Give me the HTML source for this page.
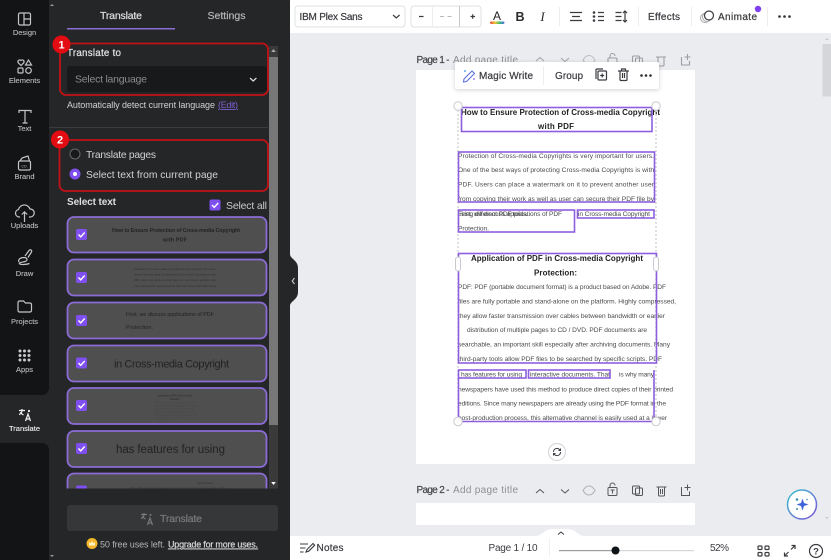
<!DOCTYPE html>
<html><head><meta charset="utf-8"><style>
html,body{margin:0;padding:0;width:831px;height:560px;overflow:hidden;background:#ebecf0}
svg{display:block;filter:blur(.35px)}
text{font-family:"Liberation Sans",sans-serif}
.r{font-size:7.500px;fill:#b9babb;stroke:#b9babb;stroke-width:.12;text-anchor:middle}
.p{fill:#4a4a4e}
.h{font-weight:700;fill:#222;font-size:8px}
.m{fill:#3b3c40;stroke:#3b3c40;stroke-width:.22;font-size:10px}
.ic{fill:none;stroke:#c4c5c6;stroke-width:1.200}
.t{fill:none;stroke:#3b3c40;stroke-width:1.200}
.t2{fill:none;stroke:#55565a;stroke-width:1}
.g{fill:none;stroke:#8a8b90;stroke-width:1.100}
.b{fill:none;stroke:#8d5fe0;stroke-width:1.600}
.c{fill:#4f4f50;stroke:#8b6cd6;stroke-width:1.800}
</style></head><body>
<svg width="831" height="560" viewBox="0 0 831 560" xmlns="http://www.w3.org/2000/svg">
<defs>
<g id="cb"><rect x="-5.500" y="-5.500" width="11" height="11" rx="2" fill="#7f4ff0"/><path d="M-3 0l2.200 2.300L3.200-2" fill="none" stroke="#fff" stroke-width="1.400"/></g>
<clipPath id="list"><rect x="60" y="200" width="220" height="288.500"/></clipPath>
<linearGradient id="ring" x1="0" y1="0" x2="1" y2="1"><stop offset="0" stop-color="#35c3cf"/><stop offset="1" stop-color="#7d4fd8"/></linearGradient>
<linearGradient id="rainbow" x1="0" x2="1"><stop offset="0" stop-color="#e8453c"/><stop offset=".35" stop-color="#f3c22f"/><stop offset=".65" stop-color="#3bbf6a"/><stop offset="1" stop-color="#4a6ee8"/></linearGradient>
</defs>

<rect width="831" height="560" fill="#ebecf0"/>

<!-- rail + panel -->
<rect x="0" y="0" width="290" height="560" fill="#252627"/>
<path d="M0 0H49V388a7 7 0 0 1-7 7H0Z" fill="#131416"/>
<path d="M0 443H42a7 7 0 0 1 7 7V560H0Z" fill="#131416"/>

<!-- rail icons -->
<g class="ic"><rect x="18.500" y="13" width="12" height="12" rx="1.500"/><path d="M24 13v12M24 19h6.500"/></g>
<text class="r" x="24.500" y="35">Design</text>
<g class="ic"><path d="M21 65.500l-2.800-2.800a1.800 1.800 0 0 1 2.800-2.200 1.800 1.800 0 0 1 2.800 2.200Z"/><path d="M28.500 60l3 5h-6Z"/><rect x="18" y="68" width="5" height="5" rx="1"/><circle cx="28.500" cy="70.500" r="2.800"/></g>
<text class="r" x="24.500" y="83">Elements</text>
<path class="ic" d="M19 113v-2.500H31V113M25 110.500v12.500M22.500 123h5"/>
<text class="r" x="24.500" y="131">Text</text>
<g class="ic"><rect x="18.500" y="161" width="12" height="9" rx="1.500"/><path d="M20 161l2-3 6-2 1.500 5"/></g>
<text x="24.500" y="167.500" font-size="3.500" fill="#c4c5c6" text-anchor="middle">CO.</text>
<text class="r" x="24.500" y="179">Brand</text>
<path class="ic" d="M20 217h-1a3.800 3.800 0 0 1-.5-7.500 6 6 0 0 1 11.500-.5 4 4 0 0 1 .5 8H29M24.500 222v-10M21.800 214.500l2.700-2.700 2.700 2.700"/>
<text class="r" x="24.500" y="228">Uploads</text>
<path class="ic" d="M19 262c-1.500-3 2-4.500 5-4.500s4.500 3 1 4-6.500 1-5.500 2.300 7 .7 10-.3M25 256l4-5.500a1.400 1.400 0 0 1 2.500 1.500l-3.500 5.500"/>
<text class="r" x="24.500" y="276">Draw</text>
<path class="ic" d="M18 302.500a1.500 1.500 0 0 1 1.500-1.500h4l2 2h4.500a1.500 1.500 0 0 1 1.500 1.500v6a1.500 1.500 0 0 1-1.500 1.500h-10.500a1.500 1.500 0 0 1-1.500-1.500Z"/>
<text class="r" x="24.500" y="324">Projects</text>
<g fill="#c9cacb"><circle cx="20" cy="351" r="1.500"/><circle cx="24.500" cy="351" r="1.500"/><circle cx="29" cy="351" r="1.500"/><circle cx="20" cy="355.500" r="1.500"/><circle cx="24.500" cy="355.500" r="1.500"/><circle cx="29" cy="355.500" r="1.500"/><circle cx="20" cy="360" r="1.500"/><circle cx="24.500" cy="360" r="1.500"/><circle cx="29" cy="360" r="1.500"/></g>
<text class="r" x="24.500" y="372">Apps</text>
<g fill="none" stroke="#f2f2f2" stroke-width="1.200"><path d="M19 410.500h6M22 409v1.500c0 2-1.500 3.500-3 4M20.500 412c.5 1.200 2 2.500 3 3M25.500 421l2.500-7 2.500 7M26.300 419h3.500"/></g><circle cx="29" cy="411" r="1.100" fill="#f2f2f2"/>
<text class="r" x="24.500" y="431" style="fill:#f0f0f0;stroke:#f0f0f0">Translate</text>
<path d="M52 4l2 2h-4zM52 557l2-2h-4z" fill="#999"/>

<!-- tabs -->
<text x="121" y="19" font-size="10.500" fill="#dcdcdd" stroke="#dcdcdd" stroke-width=".25" text-anchor="middle" textLength="42">Translate</text>
<text x="226.500" y="19" font-size="10.500" fill="#b5b6b7" stroke="#b5b6b7" stroke-width=".2" text-anchor="middle" textLength="38">Settings</text>
<rect x="67" y="28" width="108" height="1.500" fill="#8b6fd8"/>

<!-- scrollbar -->
<rect x="269" y="46" width="9" height="442.500" fill="#3a3a3b"/>
<rect x="269" y="57" width="9" height="368" fill="#777"/>
<path d="M273.500 49l2.300 3h-4.600z" fill="#aaa"/><path d="M273.500 485l2.300-3h-4.600z" fill="#fff"/>

<!-- translate to -->
<text x="67" y="56" font-size="9.800" fill="#e2e2e3" stroke="#e2e2e3" stroke-width=".22" textLength="54">Translate to</text>
<rect x="67" y="66" width="200" height="26" rx="3" fill="#18191b"/>
<text x="75" y="82.500" font-size="10.500" fill="#8b8c8e" textLength="72">Select language</text>
<path d="M250 78l3.200 3 3.200-3" fill="none" stroke="#dcdcdc" stroke-width="1.200"/>
<text x="67" y="108" font-size="9" fill="#d0d0d1" textLength="148">Automatically detect current language</text>
<text x="218" y="108" font-size="9" fill="#7d5fd0" text-decoration="underline" textLength="20">(Edit)</text>
<rect x="49" y="127" width="219" height="1" fill="#3a3b3c"/>

<!-- radios -->
<circle cx="75" cy="154" r="5" fill="#18191b" stroke="#67686a"/>
<text x="86" y="158" font-size="10.300" fill="#d2d2d3" textLength="70">Translate pages</text>
<circle cx="75" cy="174" r="5.500" fill="#7f4ff0"/><circle cx="75" cy="174" r="2" fill="#fff"/>
<text x="86" y="178" font-size="10.300" fill="#d2d2d3" textLength="132">Select text from current page</text>

<!-- select text -->
<text x="67" y="205" font-size="10" font-weight="700" fill="#dedede" textLength="49">Select text</text>
<use href="#cb" x="215" y="205"/>
<text x="226" y="209" font-size="10.500" fill="#c9c9ca" textLength="41">Select all</text>

<!-- cards -->
<g clip-path="url(#list)">
<rect class="c" x="67.500" y="217" width="199" height="35.500" rx="6.500"/>
<rect class="c" x="67.500" y="259.500" width="199" height="36" rx="6.500"/>
<rect class="c" x="67.500" y="302.500" width="199" height="36" rx="6.500"/>
<rect class="c" x="67.500" y="345.500" width="199" height="36" rx="6.500"/>
<rect class="c" x="67.500" y="388" width="199" height="36" rx="6.500"/>
<rect class="c" x="67.500" y="431" width="199" height="36" rx="6.500"/>
<rect class="c" x="67.500" y="473.500" width="199" height="36" rx="6.500"/>
<use href="#cb" x="81.500" y="234.500"/><use href="#cb" x="81.500" y="277.500"/><use href="#cb" x="81.500" y="320.500"/><use href="#cb" x="81.500" y="363"/><use href="#cb" x="81.500" y="405.500"/><use href="#cb" x="81.500" y="448.500"/><use href="#cb" x="81.500" y="491"/>
<g fill="#222">
<text x="112" y="232" font-size="5.300" font-weight="700" textLength="128">How to Ensure Protection of Cross-media Copyright</text>
<text x="163" y="241.500" font-size="5.300" font-weight="700" textLength="24">with PDF</text>
<g opacity=".75"><text x="134" y="270" font-size="2.600" textLength="82">Protection of Cross-media Copyrights is very important for users.</text>
<text x="134" y="275.500" font-size="2.600" textLength="82">One of the best ways of protecting Cross-media Copyrights is with</text>
<text x="134" y="281" font-size="2.600" textLength="82">PDF. Users can place a watermark on it to prevent another user</text>
<text x="134" y="287" font-size="2.600" textLength="82">from copying their work as well as user can secure their PDF file by</text></g>
<text x="126" y="316" font-size="5.400" textLength="88">First, we discuss applications of PDF</text>
<text x="126" y="329" font-size="5.400" textLength="27">Protection.</text>
<text x="114" y="367.500" font-size="11" textLength="115">in Cross-media Copyright</text>
<text x="116" y="453" font-size="11.500" textLength="109">has features for using</text>
<g opacity=".55"><text x="158" y="396.500" font-size="2.600" font-weight="700" textLength="34">Application of PDF in Cross-media</text>
<text x="170" y="400" font-size="2.600" font-weight="700" textLength="10">Protection:</text>
<g fill="#3a3a3a" font-size="2px"><text x="155" y="403.500" textLength="39">PDF: PDF (portable document format)</text><text x="154" y="406.500" textLength="45">files are fully portable and stand-alone on the platform</text><text x="155" y="409.500" textLength="40">they allow faster transmission over cables between</text><text x="156" y="412.500" textLength="38">distribution of multiple pages to CD / DVD. PDF</text><text x="154" y="415.500" textLength="43">searchable, an important skill especially after</text><text x="155" y="418.500" textLength="40">third-party tools allow PDF files to be searched</text></g></g>
<g opacity=".6"><text x="197" y="484" font-size="2.600" font-weight="700" textLength="16">Application</text>
<text x="130" y="489" font-size="2.600" textLength="95">PDF: PDF (portable document format) is a product based on Adobe. PDF</text></g>
</g>
</g>

<!-- translate button -->
<rect x="67" y="505" width="211" height="26" rx="3" fill="#363738"/>
<g fill="none" stroke="#77787a" stroke-width="1.200"><path d="M141 514.500h6M144 513v1.500c0 2-1.500 3.500-3 4M142.500 516c.5 1.200 2 2.500 3 3M147.500 525l2.500-7 2.500 7M148.300 523h3.500"/></g><circle cx="150.500" cy="515" r="1" fill="#77787a"/>
<text x="160" y="522" font-size="10.500" fill="#77787a" stroke="#77787a" stroke-width=".25" textLength="42">Translate</text>
<circle cx="92" cy="543.500" r="5.500" fill="#f3b62c"/><path d="M89 545.500v-3.500l1.500 1.200 1.500-2 1.500 2 1.500-1.200v3.500Z" fill="#fff3c4"/>
<text x="100" y="547.500" font-size="9" fill="#b4b5b6" textLength="65">50 free uses left.</text>
<text x="168" y="547.500" font-size="9" fill="#d8d8d9" stroke="#d8d8d9" stroke-width=".2" text-decoration="underline" textLength="90">Upgrade for more uses.</text>

<!-- red boxes -->
<rect x="60" y="43.500" width="208" height="51.500" rx="6" fill="none" stroke="#c11216" stroke-width="1.800"/>
<rect x="59.500" y="140" width="208.500" height="51" rx="6" fill="none" stroke="#c11216" stroke-width="1.800"/>
<circle cx="61.500" cy="44.500" r="9" fill="#e20c12"/><text x="61.500" y="48.500" font-size="11" font-weight="700" fill="#fff" text-anchor="middle">1</text>
<circle cx="60" cy="139.500" r="9" fill="#e20c12"/><text x="60" y="143.500" font-size="11" font-weight="700" fill="#fff" text-anchor="middle">2</text>

<!-- collapse handle -->
<path d="M290 254c0 5 8 6 8 14v24c0 8-8 9-8 14Z" fill="#252627"/>
<path d="M294.500 278l-2.300 3 2.300 3" fill="none" stroke="#c9c9ca" stroke-width="1.100"/>

<!-- top toolbar -->
<rect x="290" y="0" width="541" height="33" fill="#fff"/>
<rect x="295" y="6" width="110" height="21" rx="3" fill="#fff" stroke="#dfe0e2"/>
<text class="m" x="299.500" y="20" textLength="63">IBM Plex Sans</text>
<path d="M393 15l3.300 3 3.300-3" class="t"/>
<rect x="411" y="6" width="70" height="21" rx="3" fill="#fff" stroke="#dfe0e2"/>
<path d="M432.500 6v21" stroke="#eee"/><path d="M459.500 6v21" stroke="#c8c9cc"/>
<path d="M419 16.500h4.500M475 16.500h-4.500M472.700 14.300v4.500" stroke="#3b3c40" stroke-width="1.200"/>
<path d="M440 16.500h4M447.500 16.500h4" stroke="#b8b9bc"/>
<text x="497" y="20" font-size="12" fill="#222" text-anchor="middle">A</text>
<rect x="490" y="21.500" width="14.500" height="2.500" rx="1.200" fill="url(#rainbow)"/>
<text x="520" y="21" font-size="12.500" font-weight="700" fill="#2a2b2e" text-anchor="middle">B</text>
<text x="542.500" y="21" font-size="13" font-style="italic" fill="#2a2b2e" text-anchor="middle" style="font-family:'Liberation Serif',serif">I</text>
<path d="M559.500 7v19M638.500 7v19M691.500 7v19M767.500 7v19" stroke="#eceded"/>
<path d="M570 12.500h12M572 16.500h8M570 20.500h12" class="t"/>
<g fill="#3b3c40"><circle cx="594" cy="12.500" r="1.300"/><circle cx="594" cy="16.500" r="1.300"/><circle cx="594" cy="20.500" r="1.300"/></g>
<path d="M598 12.500h6M598 16.500h6M598 20.500h6" class="t"/>
<path d="M615.500 12.500h6M615.500 16.500h6M615.500 20.500h6M625 11v11M623 13l2-2 2 2M623 20l2 2 2-2" class="t"/>
<text class="m" x="648" y="20" textLength="32">Effects</text>
<g fill="#fff" stroke="#a8a9ad" stroke-width="1"><circle cx="705" cy="18" r="4.500"/><circle cx="707" cy="17" r="4.500"/></g><circle cx="709" cy="15.500" r="4.500" fill="#fff" stroke="#3b3c40" stroke-width="1.200"/>
<text class="m" x="718" y="20" textLength="39">Animate</text>
<circle cx="758" cy="9" r="3.200" fill="#7d3ff0"/>
<g fill="#2a2b2e"><circle cx="779.500" cy="16.500" r="1.300"/><circle cx="784.500" cy="16.500" r="1.300"/><circle cx="789.500" cy="16.500" r="1.300"/></g>

<!-- right scrollbar -->
<rect x="822.500" y="44" width="8.500" height="52.500" fill="#d5d6da"/>
<path d="M827 38l1.800 2h-3.600zM827 519l1.800-2h-3.600z" fill="#c6c7ca"/>

<!-- page 1 header -->
<text x="416.500" y="63" font-size="10" fill="#45464a" stroke="#45464a" stroke-width=".2" textLength="33">Page 1 -</text>
<text x="453" y="63" font-size="10" fill="#8e8f93" textLength="65">Add page title</text>
<path d="M536 61l4-3.500 4 3.500M561 58l4 3.500 4-3.500" class="g" opacity=".7"/>
<g class="g" opacity=".8"><path d="M583 60c2-3.500 4-4.500 6-4.500s4 1 6 4.500c-2 3.500-4 4.500-6 4.500s-4-1-6-4.500Z" opacity=".6"/><rect x="608" y="58" width="9" height="7.500" rx="1"/><path d="M610 58v-2a2.500 2.500 0 0 1 5 0"/><rect x="632.500" y="56" width="7" height="8" rx="1"/><rect x="635.500" y="58" width="7" height="7.500" rx="1"/><path d="M656 57h10M658 57v8a1 1 0 0 0 1 1h4a1 1 0 0 0 1-1v-8"/><path d="M681.500 57v8h8v-4M687.500 54v6M684.500 57h6"/></g>

<!-- page 1 -->
<rect x="416" y="70" width="279" height="394" fill="#fff"/>

<!-- doc text -->
<g>
<text class="h" x="461" y="115" textLength="199">How to Ensure Protection of Cross-media Copyright</text>
<text class="h" x="538" y="129" textLength="36">with PDF</text>
<g class="p" font-size="6.600">
<text x="458" y="158" textLength="196">Protection of Cross-media Copyrights is very important for users.</text>
<text x="458" y="172" textLength="196">One of the best ways of protecting Cross-media Copyrights is with</text>
<text x="458" y="186.500" textLength="196">PDF. Users can place a watermark on it to prevent another user</text>
<text x="458" y="201" textLength="196">from copying their work as well as user can secure their PDF file by</text>
<text x="458" y="216" textLength="104">First, we discuss applications of PDF</text>
<text x="458" y="216" textLength="70">using different PDF tools.</text>
<text x="458" y="230.500" textLength="31">Protection.</text>
<text x="578" y="216" textLength="72">in Cross-media Copyright</text>
</g>
<text class="h" x="471" y="261" textLength="172">Application of PDF in Cross-media Copyright</text>
<text class="h" x="534" y="275.500" textLength="43">Protection:</text>
<g class="p" font-size="6.600">
<text x="458" y="289" textLength="208">PDF: PDF (portable document format) is a product based on Adobe. PDF</text>
<text x="458" y="303.500" textLength="218">files are fully portable and stand-alone on the platform. Highly compressed,</text>
<text x="458" y="318" textLength="207">they allow faster transmission over cables between bandwidth or earlier</text>
<text x="467" y="332" textLength="180">distribution of multiple pages to CD / DVD. PDF documents are</text>
<text x="458" y="346.500" textLength="212">searchable, an important skill especially after archiving documents. Many</text>
<text x="458" y="361" textLength="204">third-party tools allow PDF files to be searched by specific scripts. PDF</text>
<text x="461" y="376.500" textLength="61">has features for using</text>
<text x="530" y="376.500" textLength="80">interactive documents. That</text>
<text x="619" y="376.500" textLength="35">is why many</text>
<text x="458" y="391.500" textLength="215">newspapers have used this method to produce direct copies of their printed</text>
<text x="458" y="405.500" textLength="208">editions. Since many newspapers are already using the PDF format in the</text>
<text x="458" y="420" textLength="209">post-production process, this alternative channel is easily used at a lower</text>
</g>
</g>

<!-- selection -->
<path d="M458 106V421M656 106V421" stroke="#d4d5da" stroke-width="1.500" stroke-dasharray="2 2" fill="none"/>
<rect class="b" x="461.500" y="107.500" width="190.500" height="24"/>
<rect class="b" x="458.500" y="152" width="196" height="50"/>
<rect class="b" x="458.500" y="210" width="116" height="22"/>
<rect class="b" x="577.500" y="210" width="76.500" height="8"/>
<rect class="b" x="458.500" y="253.500" width="198" height="109.500"/>
<rect class="b" x="458.500" y="370" width="67.500" height="8"/>
<rect class="b" x="528.500" y="370" width="81.500" height="8"/>
<path class="b" d="M458.500 378V421.500H654V370"/>
<g fill="#fff" stroke="#c9cad0"><circle cx="458" cy="106" r="4.200"/><circle cx="656" cy="106" r="4.200"/><circle cx="458" cy="421.500" r="4.200"/><circle cx="656" cy="421.500" r="4.200"/><rect x="455.500" y="257" width="5" height="14" rx="2.500"/><rect x="653.500" y="257" width="5" height="14" rx="2.500"/></g>
<circle cx="557" cy="452" r="8.500" fill="#fff" stroke="#d8d9dc" stroke-width="1.200"/>
<path d="M553.500 452a3.500 3.500 0 0 1 6-2.500l1 1M560.500 452a3.500 3.500 0 0 1-6 2.500l-1-1M560.500 448.500v2h-2M553.500 455.500v-2h2" fill="none" stroke="#3b3c40" stroke-width="1"/>

<!-- popup -->
<rect x="455" y="62" width="204" height="27" rx="2" fill="#fff" style="filter:drop-shadow(0 1px 2px rgba(0,0,0,.18))"/>
<path d="M464 79l8-8 2.500 2.500-8 8-3 .5Z" fill="none" stroke="#5b6fe0" stroke-width="1.100"/><circle cx="465" cy="71" r="1" fill="#5fa8e8"/><circle cx="474" cy="79" r=".9" fill="#8d5fe0"/>
<text class="m" x="479" y="79" textLength="54">Magic Write</text>
<path d="M543.500 66v19" stroke="#eee"/>
<text class="m" x="555" y="79" textLength="28">Group</text>
<g class="t"><path d="M596 79v-9a1 1 0 0 1 1-1h6"/><rect x="598" y="71" width="8.500" height="9" rx="1"/><path d="M602.200 73.500v4M600.200 75.500h4"/><path d="M618 71h11M620 71v8.500a1 1 0 0 0 1 1h5a1 1 0 0 0 1-1V71M621.500 71v-2h4v2M622.500 73v5M624.500 73v5"/></g>
<g fill="#2a2b2e"><circle cx="641.500" cy="75.500" r="1.300"/><circle cx="646" cy="75.500" r="1.300"/><circle cx="650.500" cy="75.500" r="1.300"/></g>

<!-- page 2 header -->
<text x="416.500" y="493" font-size="10" fill="#45464a" stroke="#45464a" stroke-width=".2" textLength="33">Page 2 -</text>
<text x="453" y="493" font-size="10" fill="#8e8f93" textLength="65">Add page title</text>
<path d="M536 493l4-3.500 4 3.500M561 489.500l4 3.500 4-3.500" class="t2"/>
<g class="g"><path d="M583 490.500c2-3.500 4-4.500 6-4.500s4 1 6 4.500c-2 3.500-4 4.500-6 4.500s-4-1-6-4.500Z" opacity=".6"/></g>
<g class="t2"><rect x="608" y="487.500" width="9" height="8" rx="1"/><path d="M610 487.500v-2a2.500 2.500 0 0 1 5 0M610.500 490h4M612.500 490v3.500"/><rect x="632.500" y="486" width="7" height="8" rx="1"/><rect x="635.500" y="488" width="7" height="7.500" rx="1"/><path d="M656.500 487h10M658.500 487v8a1 1 0 0 0 1 1h4a1 1 0 0 0 1-1v-8M660.500 489v5M662.500 489v5"/><path d="M681.500 487v8.500h8v-4M687.500 484.500v6M684.500 487.500h6"/></g>
<rect x="416" y="503" width="279" height="22" fill="#fff"/>

<!-- AI button -->
<circle cx="802" cy="504.500" r="14.500" fill="#fff" stroke="url(#ring)" stroke-width="1.500"/>
<path d="M802.500 498.500l1.500 4.500 4.500 1.500-4.500 1.500-1.500 4.500-1.500-4.500-4.500-1.500 4.500-1.500Z" fill="#3f63d8"/><circle cx="797" cy="499.500" r="1.300" fill="#3a8fb0"/><circle cx="807" cy="499.500" r=".8" fill="#3a8fb0"/><circle cx="797" cy="509" r="1" fill="#3a8fb0"/>

<!-- bottom bar -->
<path d="M535 536c6 0 8-4 12-6 3-1.500 23-1.500 26 0 4 2 6 6 12 6Z" fill="#fff"/>
<rect x="290" y="536" width="541" height="24" fill="#fff"/>
<path d="M558 534.500l3-2.500 3 2.500" fill="none" stroke="#3b3c40" stroke-width="1"/>
<path d="M300 544h8M300 548h5.500M300 552h3.500M306 552l1-2.500 6-6 1.700 1.700-6 6Z" fill="none" stroke="#3b3c40" stroke-width="1.100"/>
<text class="m" x="316.500" y="551" textLength="27">Notes</text>
<text x="488.500" y="551" font-size="10" fill="#3b3c40" textLength="49">Page 1 / 10</text>
<path d="M549.500 538v19" stroke="#f0f0f1"/>
<rect x="559" y="550" width="56" height="1.200" fill="#9a9b9e"/><rect x="615" y="550" width="79" height="1.200" fill="#d5d6d8"/>
<circle cx="615.500" cy="550.500" r="4" fill="#0e1318"/>
<text x="710" y="551" font-size="10" fill="#3b3c40" textLength="19">52%</text>
<g class="t"><rect x="758" y="546" width="4" height="3.500" rx="1"/><rect x="765" y="546" width="4" height="3.500" rx="1"/><rect x="758" y="552.500" width="4" height="3.500" rx="1"/><rect x="765" y="552.500" width="4" height="3.500" rx="1"/><path d="M791 549.500l4-4M791.500 545.500h3.500v3.500M784.500 556l4-4M784.500 552.500v3.500h3.500"/><circle cx="816" cy="551" r="6.500"/></g>
<text x="816" y="554.500" font-size="9.500" font-weight="700" fill="#3b3c40" text-anchor="middle">?</text>
</svg>
</body></html>
